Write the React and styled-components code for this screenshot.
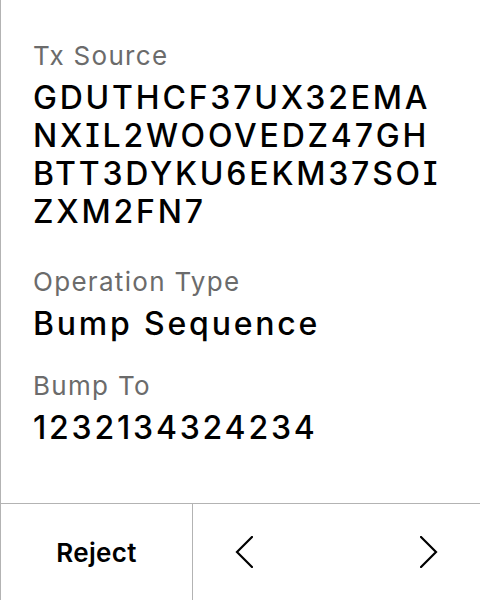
import React from 'react';
import styled, { createGlobalStyle } from 'styled-components';

const Global = createGlobalStyle`
  html, body {
    margin: 0;
    padding: 0;
    background: #fff;
  }
  body {
    font-family: Inter, "Noto Sans", sans-serif;
    font-feature-settings: "cv08";
    color: #000;
  }
`;

const Screen = styled.div`
  width: 480px;
  height: 600px;
  box-sizing: border-box;
  border-left: 1px solid #b3b3b3;
  display: flex;
  flex-direction: column;
`;

const Details = styled.div`
  flex: 1;
  padding: 41px 34px 0 32px;
  display: flex;
  flex-direction: column;
`;

const Field = styled.div`
  display: flex;
  flex-direction: column;
  gap: 8px;
  margin-top: ${(p) => p.$space || 0}px;
`;

const Label = styled.div`
  font-size: 26px;
  line-height: 30px;
  letter-spacing: 1.3px;
  color: #6b6b6b;
`;

const Value = styled.div`
  font-size: 32px;
  font-weight: 500;
  line-height: 38px;
  letter-spacing: 2.8px;
  color: #000;
  word-break: break-all;
`;

const Footer = styled.div`
  height: 96px;
  border-top: 1px solid #b3b3b3;
  display: flex;
`;

const RejectButton = styled.button`
  width: 192px;
  border: none;
  border-right: 1px solid #b3b3b3;
  background: none;
  font-family: inherit;
  font-feature-settings: inherit;
  font-size: 26px;
  font-weight: 600;
  letter-spacing: 0.3px;
  color: #000;
  padding: 0;
`;

const Nav = styled.div`
  flex: 1;
  display: flex;
  align-items: center;
  justify-content: space-between;
  padding: 0 42px;
`;

const Arrow = styled.button`
  border: none;
  background: none;
  padding: 0;
  display: flex;
  align-items: center;
`;

function Chevron({ dir }) {
  const d = dir === 'left' ? 'M17 1 L2 16 L17 31' : 'M1 1 L16 16 L1 31';
  return (
    <svg width="18" height="32" viewBox="0 0 18 32" fill="none">
      <path d={d} stroke="#000" strokeWidth="2.2" strokeLinecap="square" />
    </svg>
  );
}

const fields = [
  { label: 'Tx Source', value: 'GDUTHCF37UX32EMANXIL2WOOVEDZ47GHBTT3DYKU6EKM37SOIZXM2FN7', space: 0 },
  { label: 'Operation Type', value: 'Bump Sequence', space: 36 },
  { label: 'Bump To', value: '1232134324234', space: 28 },
];

export default function App() {
  return (
    <>
      <Global />
      <Screen>
        <Details>
          {fields.map((f) => (
            <Field key={f.label} $space={f.space}>
              <Label>{f.label}</Label>
              <Value>{f.value}</Value>
            </Field>
          ))}
        </Details>
        <Footer>
          <RejectButton>Reject</RejectButton>
          <Nav>
            <Arrow><Chevron dir="left" /></Arrow>
            <Arrow><Chevron dir="right" /></Arrow>
          </Nav>
        </Footer>
      </Screen>
    </>
  );
}
